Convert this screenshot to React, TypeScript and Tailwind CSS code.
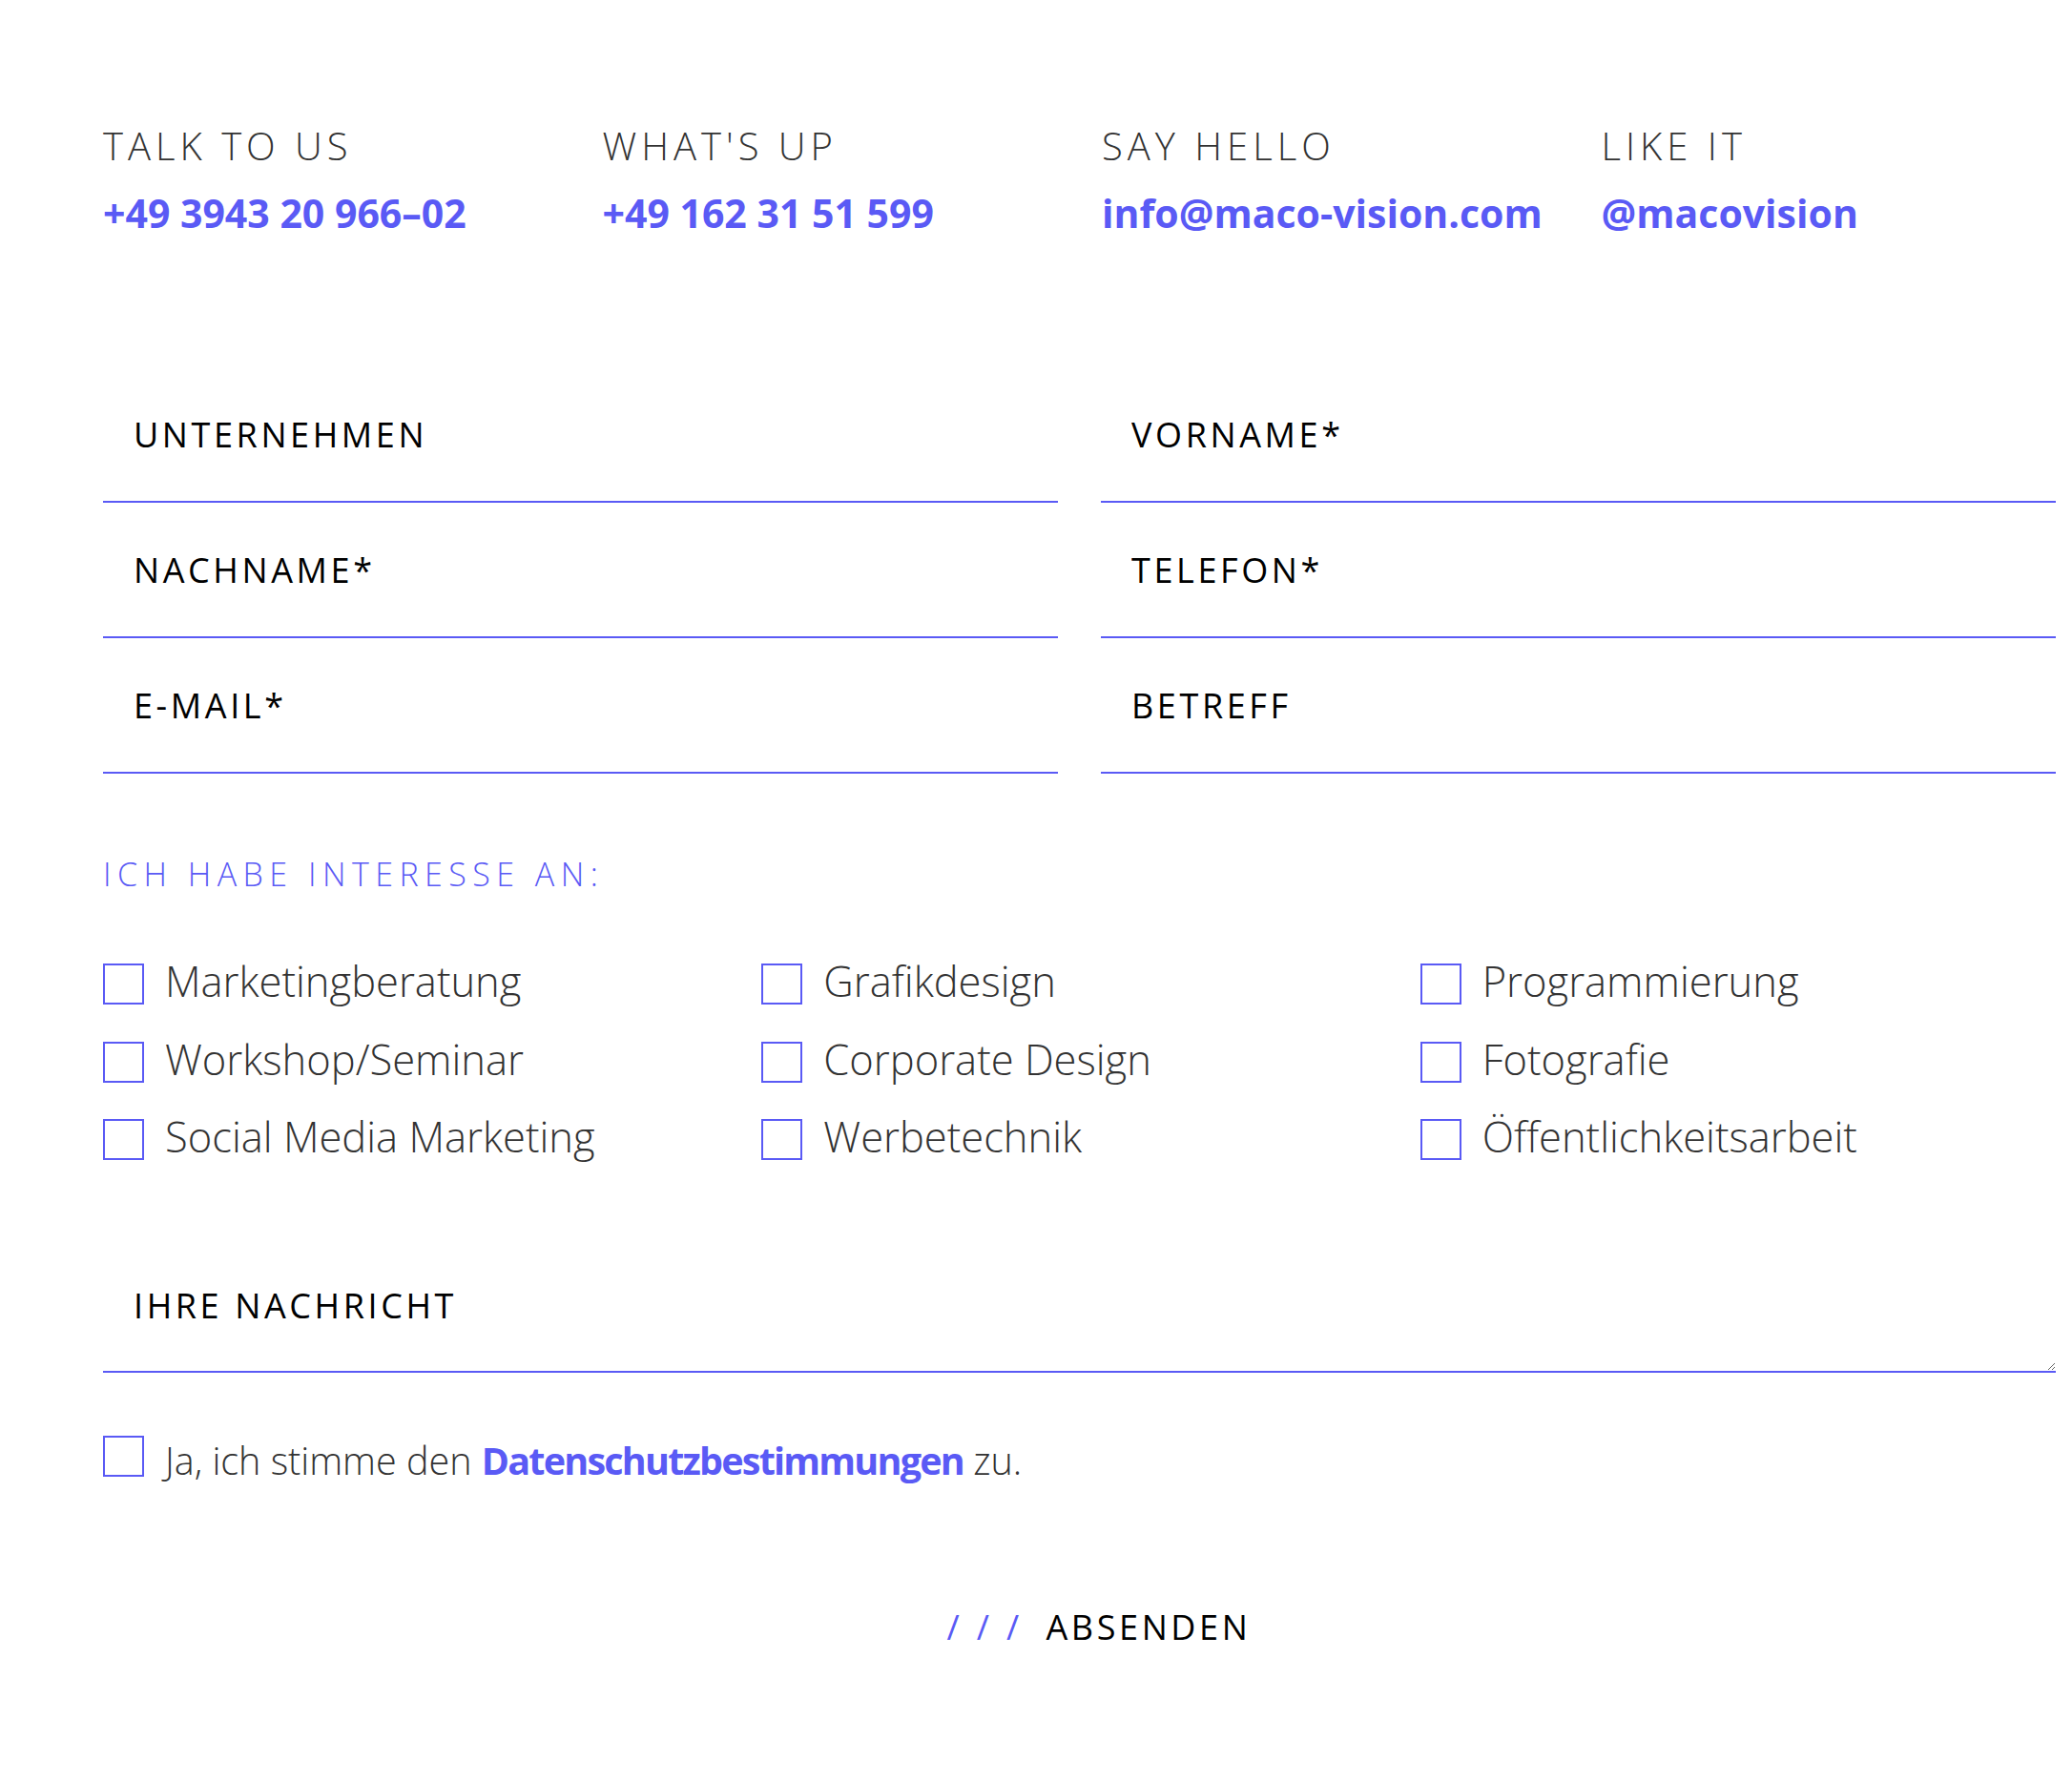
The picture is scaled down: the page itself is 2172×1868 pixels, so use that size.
import React from 'react';

const contacts = [
	{ label: 'TALK TO US', value: '+49 3943 20 966–02' },
	{ label: "WHAT'S UP", value: '+49 162 31 51 599' },
	{ label: 'SAY HELLO', value: 'info@maco-vision.com' },
	{ label: 'LIKE IT', value: '@macovision' },
];

const fields = ['UNTERNEHMEN', 'VORNAME*', 'NACHNAME*', 'TELEFON*', 'E-MAIL*', 'BETREFF'];

const interests = [
	'Marketingberatung',
	'Grafikdesign',
	'Programmierung',
	'Workshop/Seminar',
	'Corporate Design',
	'Fotografie',
	'Social Media Marketing',
	'Werbetechnik',
	'Öffentlichkeitsarbeit',
];

const Box: React.FC = () => <span className="block h-[43px] w-[43px] shrink-0 border-2 border-[#5a5af5] bg-white" />;

const App: React.FC = () => {
	return (
		<div className="min-h-screen w-full bg-white font-['Open_Sans','Noto_Sans',sans-serif]">
			<form className="ml-[108px] w-[2047px] pt-[133px] pb-[140px]" onSubmit={(e) => e.preventDefault()}>
				<div className="grid grid-cols-4 gap-x-[47px]">
					{contacts.map((c) => (
						<div key={c.label}>
							<p className="text-[40px] font-light leading-none tracking-[0.125em] text-[#333333]">{c.label}</p>
							<a href="#" className="mt-[30px] block text-[41px] font-bold leading-none text-[#5a5af5]">
								{c.value}
							</a>
						</div>
					))}
				</div>

				<div className="mt-[141px] grid grid-cols-2 gap-x-[45px]">
					{fields.map((f) => (
						<input
							key={f}
							type="text"
							placeholder={f}
							className="h-[142px] w-full border-b-2 border-[#5a5af5] bg-transparent pl-[32px] text-[36px] tracking-[0.1em] text-black outline-none placeholder:text-black"
						/>
					))}
				</div>

				<h3 className="mt-[88px] text-[34px] font-light leading-none tracking-[0.19em] text-[#5a5af5]">ICH HABE INTERESSE AN:</h3>

				<div className="mt-[77px] grid grid-cols-3 gap-x-[24px] gap-y-[38.5px]">
					{interests.map((i) => (
						<label key={i} className="flex items-start gap-[22px]">
							<Box />
							<span className="-mt-[3px] text-[43.5px] font-light leading-none text-[#333333]">{i}</span>
						</label>
					))}
				</div>

				<textarea
					placeholder="IHRE NACHRICHT"
					className="mt-[77px] block h-[146px] w-full border-b-2 border-[#5a5af5] bg-transparent pt-[51px] pl-[32px] text-[36px] leading-[49px] tracking-[0.1em] text-black outline-none placeholder:text-black"
				/>

				<label className="mt-[66px] flex items-start gap-[22px]">
					<Box />
					<span className="mt-[7px] text-[39.5px] font-light leading-none text-[#333333]">
						Ja, ich stimme den{' '}
						<a href="#" className="font-bold tracking-[-0.045em] text-[#5a5af5]">
							Datenschutzbestimmungen
						</a>{' '}
						zu.
					</span>
				</label>

				<div className="mt-[136px] flex justify-center pl-[41px]">
					<button type="submit" className="flex items-center gap-[24px] text-[36px] leading-none">
						<span className="tracking-[0.12em] text-[#5a5af5]">/ / /</span>
						<span className="tracking-[0.1em] text-black">ABSENDEN</span>
					</button>
				</div>
			</form>
		</div>
	);
};

export default App;
